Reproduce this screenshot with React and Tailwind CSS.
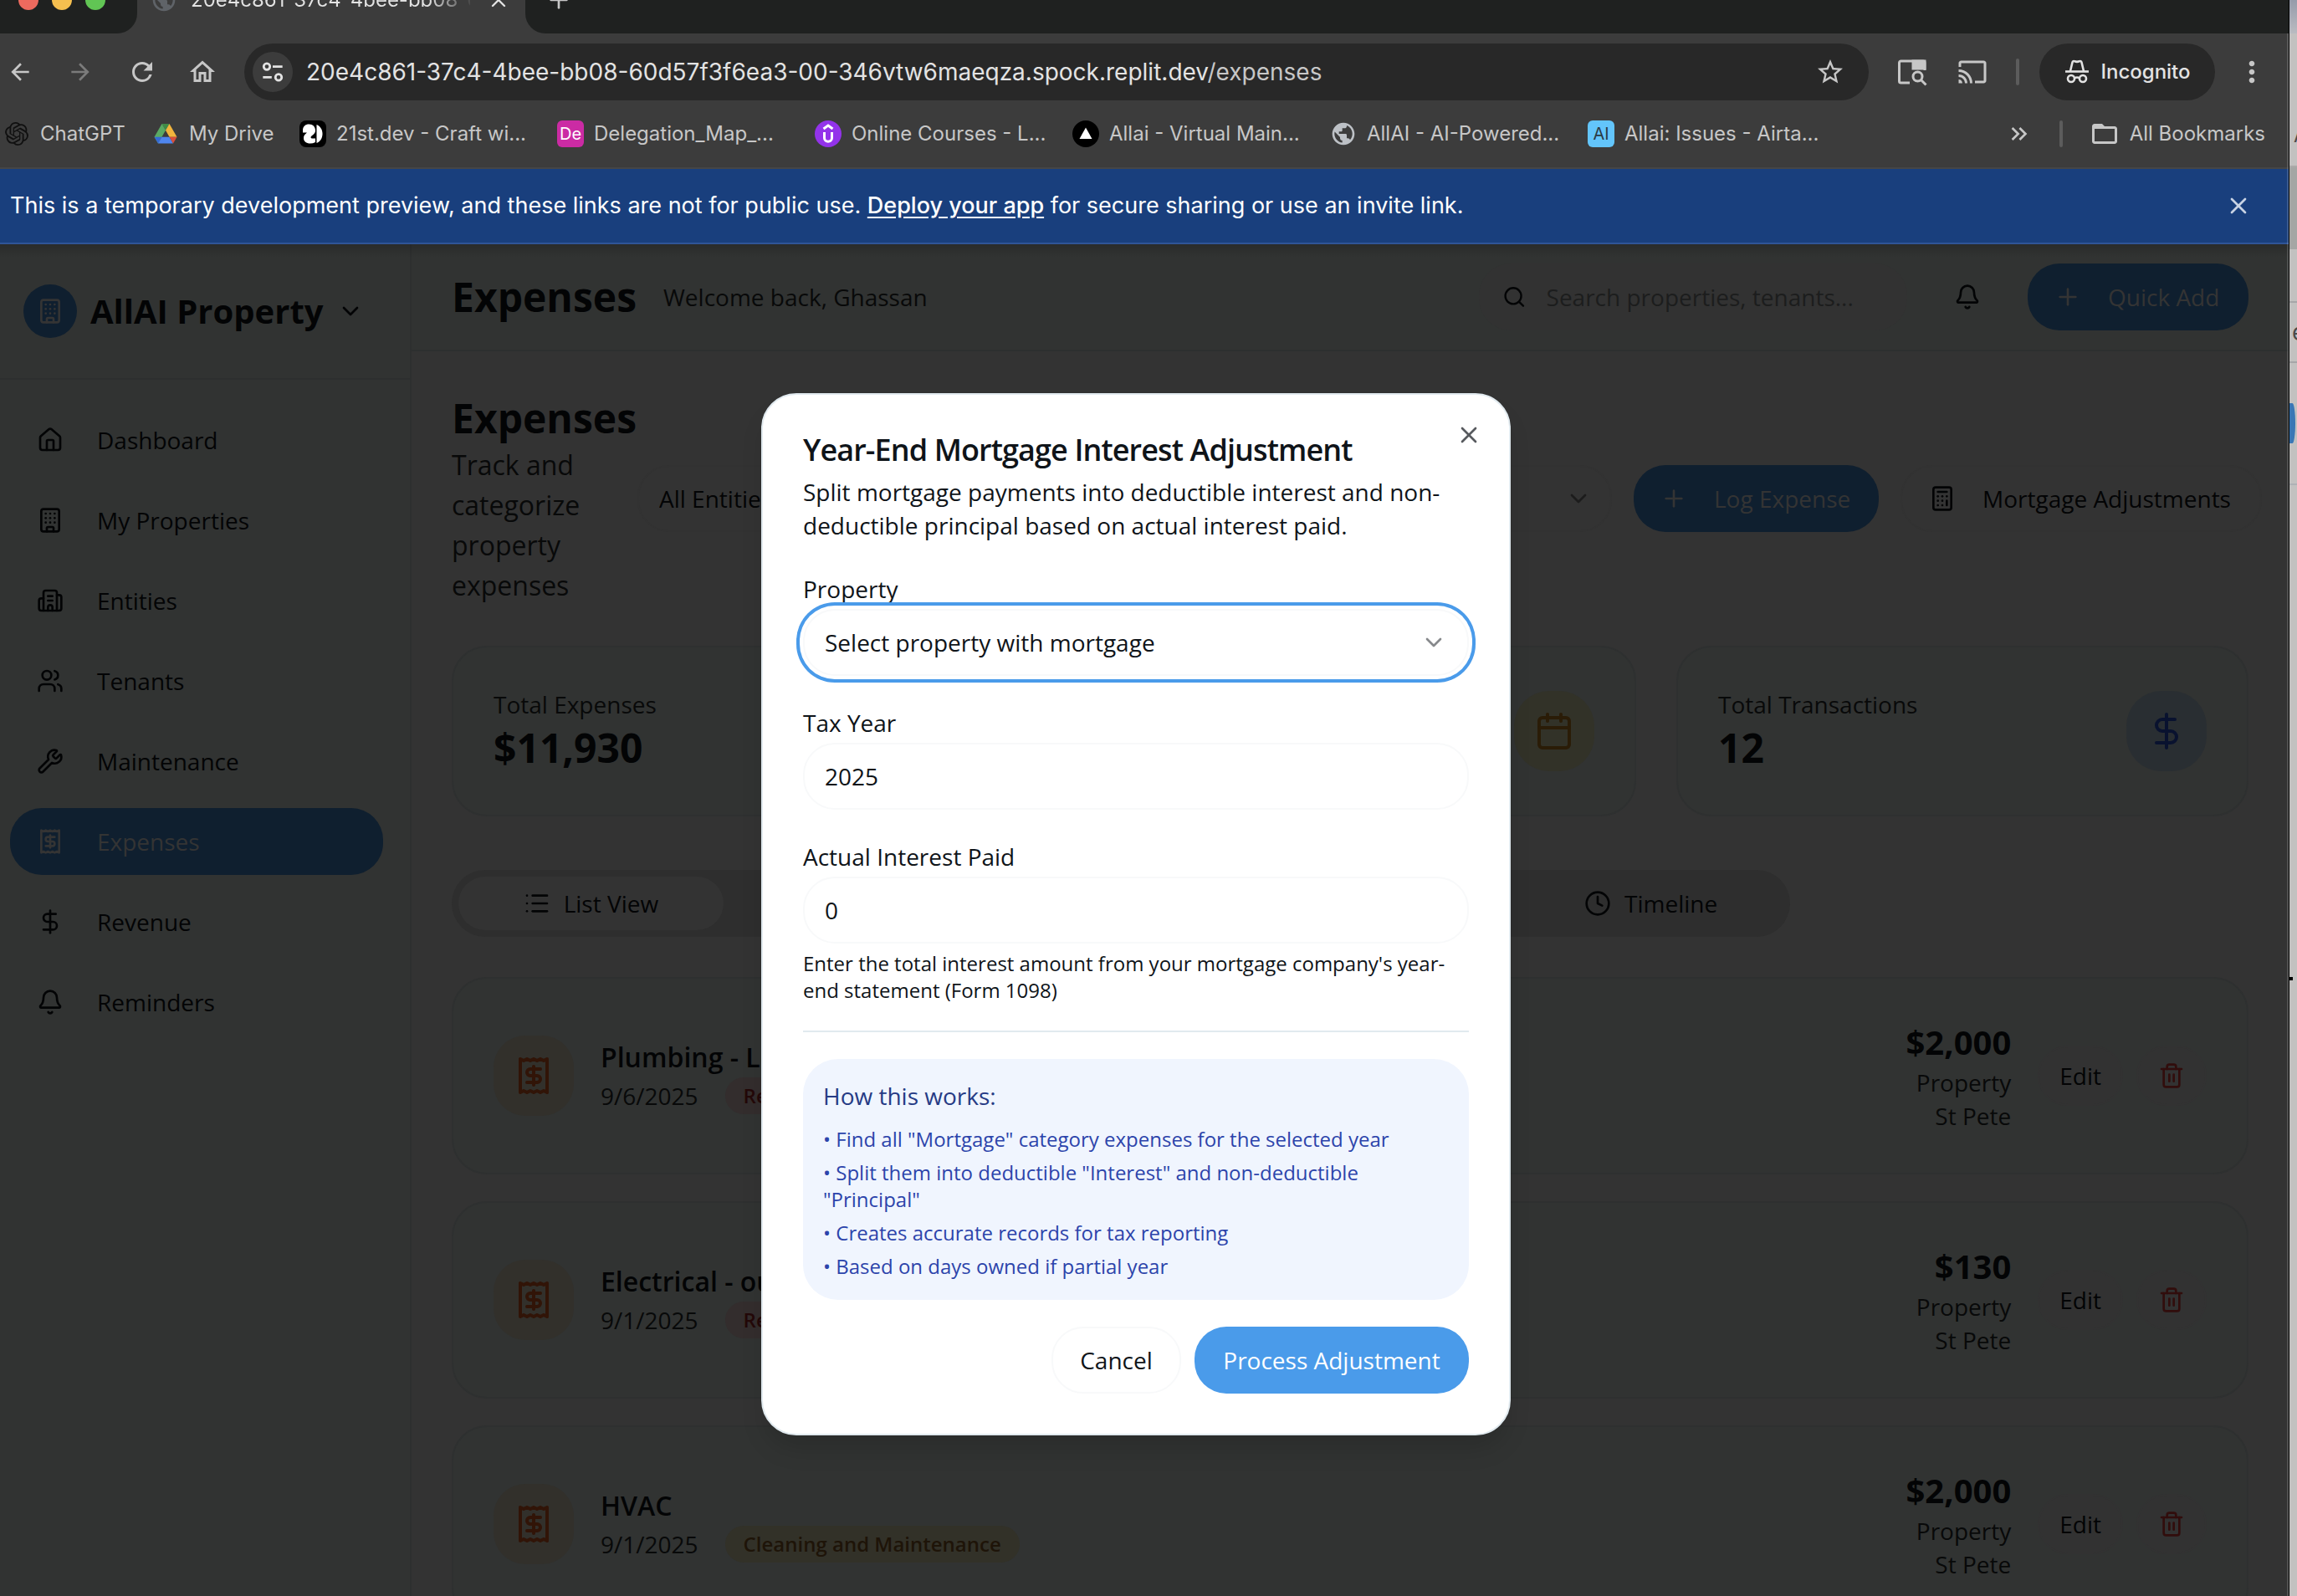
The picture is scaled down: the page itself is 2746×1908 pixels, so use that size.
import React from "react";
import {
  House, Building, Building2, Users, Wrench, Receipt, DollarSign, Bell, ChevronDown,
  Search, Plus, Calculator, Calendar, List, Tag, Clock, Trash2, X, ChartPie, TrendingUp,
} from "lucide-react";
import { SiOpenai } from "react-icons/si";
import {
  MdArrowBack, MdArrowForward, MdRefresh, MdOutlineHome, MdStarBorder, MdCast,
  MdMoreVert, MdPublic, MdFolderOpen, MdKeyboardDoubleArrowRight,
} from "react-icons/md";

function SiteSettingsIcon() {
  return (
    <svg viewBox="0 0 24 24" className="size-7" fill="none" stroke="currentColor" strokeWidth="2.4" aria-hidden="true">
      <circle cx="6" cy="6.5" r="3.2" />
      <path d="M12 6.5h10M2 17.5h9" />
      <circle cx="18" cy="17.5" r="3.2" />
    </svg>
  );
}

function SidePanelSearchIcon() {
  return (
    <svg viewBox="0 0 36 36" className="size-9" fill="none" stroke="currentColor" strokeWidth="3" aria-hidden="true">
      <path d="M15 31H4.500a2 2 0 0 1-2-2V7a2 2 0 0 1 2-2H31a2 2 0 0 1 2 2v9" />
      <path d="M19 5h14v9H19z" fill="currentColor" />
      <circle cx="24.500" cy="23.500" r="5.500" />
      <path d="M28.500 27.500l6 6" />
    </svg>
  );
}

function IncognitoIcon() {
  return (
    <svg viewBox="0 0 32 32" className="size-8" fill="none" stroke="currentColor" strokeWidth="2.600" aria-hidden="true">
      <path d="M2 15.500h28" />
      <path d="M8 15L10.500 4.500c.4-1.500 1.600-1.800 2.800-1.200 1.800.8 3.600.8 5.400 0 1.200-.6 2.400-.3 2.800 1.200L24 15" />
      <circle cx="9" cy="24" r="4" />
      <circle cx="23" cy="24" r="4" />
      <path d="M13 23.500c2-1.300 4-1.300 6 0" />
    </svg>
  );
}

function DriveIcon() {
  return (
    <svg viewBox="0 0 28 28" className="size-7" aria-hidden="true">
      <path d="M9.500 2h9L14 9.800z" fill="#3f8a46" />
      <path d="M9.500 2L14 9.800 5 25.500.5 17.700z" fill="#5aa963" />
      <path d="M18.500 2l9 15.700h-9L14 9.800z" fill="#f2b53d" />
      <path d="M.5 17.700h9L5 25.500z" fill="#3469d6" />
      <path d="M9.500 17.700h9L23 25.500H5z" fill="#4f86ee" />
      <path d="M18.500 17.700h9L23 25.500z" fill="#d94f3d" />
    </svg>
  );
}

function TwentyFirstIcon() {
  return (
    <svg viewBox="0 0 32 32" className="size-8" aria-hidden="true">
      <rect width="32" height="32" rx="8" fill="#000" />
      <path d="M4 12c0-5 3-7.500 7.500-7.500S19 7.500 19 12c0 5-5 5.500-5.500 8 0 1 1 1.500 2.500 1.500h3V26c-2 1-4 1.500-6 1.500-5 0-8-2.500-8-6.500 0-3.500 2.500-5 4-6.500H4z" fill="#fff" />
      <path d="M20.500 5c4.500 2 7 6 7 11s-2.500 9-7 11z" fill="#fff" />
    </svg>
  );
}

function UdemyIcon() {
  return (
    <svg viewBox="0 0 32 32" className="size-8" aria-hidden="true">
      <circle cx="16" cy="16" r="16" fill="#9333ea" />
      <path d="M10.500 10L16 6l5.500 4M11.500 14v7c0 5.500 9 5.500 9 0v-7" fill="none" stroke="#fff" strokeWidth="3" />
    </svg>
  );
}

function TriangleIcon() {
  return (
    <svg viewBox="0 0 32 32" className="size-8" aria-hidden="true">
      <circle cx="16" cy="16" r="16" fill="#000" />
      <path d="M16 8.500L23.500 22h-15z" fill="#fff" />
    </svg>
  );
}

function LetterTile({ children, className }) {
  return <span className={`flex size-8 items-center justify-center rounded-md text-xl leading-8 ${className}`}>{children}</span>;
}

const bookmarks = [
  { label: "ChatGPT", icon: <SiOpenai className="size-7 text-[#101010]" />, width: "w-[178px]" },
  { label: "My Drive", icon: <DriveIcon />, width: "w-[176px]" },
  { label: "21st.dev - Craft wi...", icon: <TwentyFirstIcon />, width: "w-[308px]" },
  { label: "Delegation_Map_...", icon: <LetterTile className="bg-[#cb2ba4] text-white">De</LetterTile>, width: "w-[308px]" },
  { label: "Online Courses - L...", icon: <UdemyIcon />, width: "w-[308px]" },
  { label: "Allai - Virtual Main...", icon: <TriangleIcon />, width: "w-[308px]" },
  { label: "AllAI - AI-Powered...", icon: <MdPublic className="size-8 text-[#bdc1c6]" />, width: "w-[308px]" },
  { label: "Allai: Issues - Airta...", icon: <LetterTile className="bg-[#63c5fb] text-[#2b3a44]">AI</LetterTile>, width: "w-[308px]" },
];

function BrowserChrome() {
  return (
    <header className="shrink-0 border-b-2 border-[#464646] bg-[#3c3c3c] font-[Inter,sans-serif] text-[#c7c7c7]">
      <div className="h-10 overflow-hidden bg-[#1f2120]">
        <div className="-mt-10 flex h-20 items-stretch">
          <div className="relative z-10 flex w-[164px] items-center gap-4 rounded-br-[24px] bg-[#1f2120] pl-[22px]">
            <span className="size-6 rounded-full bg-[#ed6a5e]" />
            <span className="size-6 rounded-full bg-[#f5bf4f]" />
            <span className="size-6 rounded-full bg-[#61c554]" />
          </div>
          <div className="-ml-6 flex w-[512px] items-center bg-[#3c3c3c] pl-[40px]">
            <MdPublic className="size-8 shrink-0 text-[#5f6368]" />
            <span className="ml-4 w-[334px] overflow-hidden bg-linear-to-r from-[#e3e3e3] from-85% to-[#4a4a4a] bg-clip-text text-2xl whitespace-nowrap text-transparent">
              20e4c861-37c4-4bee-bb08-60d5
            </span>
            <button aria-label="Close tab" className="ml-5 text-[#e3e3e3]"><X className="size-7" /></button>
          </div>
          <div className="relative z-10 -ml-6 flex flex-1 items-center rounded-bl-[24px] bg-[#1f2120] pl-[24px]">
            <button aria-label="New tab" className="text-[#c7c7c7]"><Plus className="size-8" /></button>
          </div>
        </div>
      </div>
      <div className="flex h-[92px] items-center pr-6 pl-2">
        <button aria-label="Back"><MdArrowBack className="size-8" /></button>
        <button aria-label="Forward" className="ml-10 text-[#7b7b7b]"><MdArrowForward className="size-8" /></button>
        <button aria-label="Reload" className="ml-10"><MdRefresh className="size-9" /></button>
        <button aria-label="Home" className="ml-9"><MdOutlineHome className="size-9" /></button>
        <div className="ml-8 flex h-[68px] flex-1 items-center rounded-full bg-[#282828] pr-7 pl-[10px]">
          <button aria-label="Site information" className="flex size-12 items-center justify-center rounded-full bg-[#3c3c3c] text-[#e3e3e3]">
            <SiteSettingsIcon />
          </button>
          <p className="ml-4 flex-1 text-[28px] leading-10 whitespace-nowrap text-[#e3e3e3]">
            20e4c861-37c4-4bee-bb08-60d57f3f6ea3-00-346vtw6maeqza.spock.replit.dev<span className="text-[#c7c7c7]">/expenses</span>
          </p>
          <button aria-label="Bookmark this tab"><MdStarBorder className="size-9" /></button>
        </div>
        <button aria-label="Search side panel" className="ml-[34px]"><SidePanelSearchIcon /></button>
        <button aria-label="Cast" className="ml-9"><MdCast className="size-9" /></button>
        <span className="ml-[34px] h-8 w-1 rounded-full bg-[#5c5c5c]" />
        <div className="ml-6 flex h-[68px] w-[210px] items-center justify-center gap-3 rounded-full bg-[#282828] text-2xl font-medium text-[#e3e3e3]">
          <IncognitoIcon />
          Incognito
        </div>
        <button aria-label="Menu" className="ml-6"><MdMoreVert className="size-10" /></button>
      </div>
      <nav aria-label="Bookmarks" className="flex h-[68px] items-start pt-2 pr-7 pl-1 text-2xl">
        {bookmarks.map((b) => (
          <a key={b.label} href="#" className={`flex h-10 items-center gap-3 whitespace-nowrap ${b.width}`}>
            <span className="flex w-8 shrink-0 justify-center">{b.icon}</span>
            {b.label}
          </a>
        ))}
        <button aria-label="More bookmarks" className="ml-auto flex h-10 items-center"><MdKeyboardDoubleArrowRight className="size-8" /></button>
        <span className="mt-1 ml-8 h-8 w-1 rounded-full bg-[#5c5c5c]" />
        <a href="#" className="ml-8 flex h-10 items-center gap-3 whitespace-nowrap">
          <MdFolderOpen className="size-9" />
          All Bookmarks
        </a>
      </nav>
    </header>
  );
}

function PreviewBanner() {
  return (
    <div className="flex h-[90px] shrink-0 items-center justify-between border-b-2 border-[#2f5597] bg-[#193f7d] pr-11 pl-3 font-[Inter,sans-serif] text-[27px] text-white">
      <p className="whitespace-nowrap">
        This is a temporary development preview, and these links are not for public use.{" "}
        <a href="#" className="font-medium underline underline-offset-4">Deploy your app</a> for secure sharing or use an invite link.
      </p>
      <button aria-label="Dismiss" className="text-[#c8d3e4]"><X className="size-8" /></button>
    </div>
  );
}

const navItems = [
  ["Dashboard", House],
  ["My Properties", Building],
  ["Entities", Building2],
  ["Tenants", Users],
  ["Maintenance", Wrench],
  ["Expenses", Receipt],
  ["Revenue", DollarSign],
  ["Reminders", Bell],
];

function Sidebar() {
  return (
    <aside className="w-[492px] shrink-0 border-r-2 border-[#2d2f2f] bg-[#313332]">
      <div className="flex items-center border-b-2 border-[#2d2f2f] py-12 pl-7">
        <span className="flex size-16 items-center justify-center rounded-full bg-[#0f1f2f] text-[#343434]">
          <Building className="size-8" />
        </span>
        <span className="ml-4 text-[40px] leading-10 font-bold text-[#030405]">AllAI Property</span>
        <button aria-label="Switch organisation" className="ml-4"><ChevronDown className="size-8" /></button>
      </div>
      <nav className="flex flex-col gap-4 py-8 pr-8 pl-3">
        {navItems.map(([label, Icon]) => (
          <a
            key={label}
            href="#"
            aria-current={label === "Expenses" ? "page" : undefined}
            className={`flex h-20 items-center gap-10 rounded-[38px] px-8 text-[28px] font-medium ${
              label === "Expenses" ? "bg-[#0f1f2f] text-[#343434]" : "text-[#030405]"
            }`}
          >
            <Icon className="size-8" />
            {label}
          </a>
        ))}
      </nav>
    </aside>
  );
}

function TopBar() {
  return (
    <div className="flex h-32 items-center border-b-2 border-[#2d2f2f] bg-[#313332] px-12 text-[28px]">
      <h1 className="text-5xl leading-16 font-bold">Expenses</h1>
      <p className="ml-8 text-[#080909]">Welcome back, Ghassan</p>
      <label className="ml-auto flex h-20 w-[512px] items-center gap-6 rounded-[38px] bg-[#323232] pl-7">
        <Search className="size-8" />
        <input
          aria-label="Search"
          placeholder="Search properties, tenants..."
          className="w-full bg-transparent placeholder:text-[#1c1d1d]"
        />
      </label>
      <button aria-label="Notifications" className="ml-14"><Bell className="size-8" /></button>
      <button className="ml-14 flex h-20 min-w-[264px] items-center gap-8 rounded-[38px] bg-[#0f1f2f] px-8 font-medium text-[#343434]">
        <Plus className="size-8" />
        Quick Add
      </button>
    </div>
  );
}

function FilterSelect({ label, className }) {
  return (
    <div className={`relative ${className}`}>
      <select aria-label={label} className="h-20 w-full appearance-none rounded-[38px] border-2 border-[#323232] px-6 text-[28px]">
        <option>{label}</option>
      </select>
      <ChevronDown className="pointer-events-none absolute top-6 right-6 size-8 text-[#1c1c1c]" />
    </div>
  );
}

function PageHeader() {
  return (
    <div className="-mr-4 flex items-center gap-[26px] text-[28px]">
      <div className="w-[196px] shrink-0">
        <h2 className="text-5xl leading-16 font-bold">Expenses</h2>
        <p className="text-[32px] leading-12 text-[#080909]">Track and categorize property expenses</p>
      </div>
      <FilterSelect label="All Entities" className="flex-1" />
      <FilterSelect label="All Properties" className="flex-1" />
      <FilterSelect label="All Categories" className="flex-1" />
      <button className="flex h-20 min-w-[293px] items-center gap-8 rounded-[38px] bg-[#0f1f2f] px-8 font-medium whitespace-nowrap text-[#343434]">
        <Plus className="size-8" />
        Log Expense
      </button>
      <button className="flex h-20 min-w-[432px] items-center gap-8 rounded-[38px] border-2 border-[#323232] px-8 font-medium whitespace-nowrap">
        <Calculator className="size-8" />
        Mortgage Adjustments
      </button>
    </div>
  );
}

function StatCard({ label, value, icon: Icon, tone }) {
  return (
    <section className="flex items-center justify-between rounded-[42px] border-2 border-[#2e3030] bg-[#313332] p-12">
      <div>
        <h3 className="text-[28px] leading-10 font-medium text-[#080909]">{label}</h3>
        <p className="text-5xl leading-16 font-bold">{value}</p>
      </div>
      <span className={`flex size-24 items-center justify-center rounded-[42px] ${tone}`}>
        <Icon className="size-12" />
      </span>
    </section>
  );
}

const tabs = [
  ["List View", List],
  ["Category", Tag],
  ["Chart", ChartPie],
  ["Trends", TrendingUp],
  ["Timeline", Clock],
];

function ViewTabs() {
  return (
    <div role="tablist" className="grid h-20 w-[1600px] grid-cols-5 rounded-[42px] bg-[#2e2e2e] p-2 text-[28px] font-medium">
      {tabs.map(([label, Icon], i) => (
        <button
          key={label}
          role="tab"
          aria-selected={i === 0}
          className={`flex items-center justify-center gap-4 rounded-[38px] ${i === 0 ? "bg-[#333333]" : ""}`}
        >
          <Icon className="size-8" />
          {label}
        </button>
      ))}
    </div>
  );
}

const expenses = [
  { title: "Plumbing - Leak repair", date: "9/6/2025", category: "Repairs", tone: "bg-[#332d2d] text-[#230808]", amount: "$2,000" },
  { title: "Electrical - outlets", date: "9/1/2025", category: "Repairs", tone: "bg-[#332d2d] text-[#230808]", amount: "$130" },
  { title: "HVAC", date: "9/1/2025", category: "Cleaning and Maintenance", tone: "bg-[#323128] text-[#1e1408]", amount: "$2,000" },
];

function ExpenseRow({ expense }) {
  return (
    <li className="flex items-center rounded-[42px] border-2 border-[#2e3030] bg-[#313332] p-12">
      <span className="flex size-24 items-center justify-center rounded-[38px] bg-[#32302b] text-[#311407]">
        <Receipt className="size-12" />
      </span>
      <div className="ml-8">
        <h3 className="text-[32px] leading-12 font-semibold">{expense.title}</h3>
        <div className="flex items-center gap-8">
          <span className="text-[28px] leading-10 text-[#080909]">{expense.date}</span>
          <span className={`rounded-full px-[22px] py-1.5 text-2xl leading-8 font-semibold ${expense.tone}`}>{expense.category}</span>
        </div>
      </div>
      <div className="ml-auto text-right text-[28px] leading-10 text-[#080909]">
        <p className="text-[40px] leading-14 font-bold text-[#030405]">{expense.amount}</p>
        <p>Property</p>
        <p>St Pete</p>
      </div>
      <button className="ml-8 h-[72px] rounded-[38px] border-2 border-[#323232] bg-[#323232] px-6 text-[28px] font-medium">Edit</button>
      <button aria-label="Delete" className="ml-4 h-[72px] rounded-[38px] border-2 border-[#323232] bg-[#323232] px-6 text-[#310d0c]">
        <Trash2 className="size-8" />
      </button>
    </li>
  );
}

function MortgageDialog() {
  const field = "h-20 w-full rounded-[38px] border-2 border-[#f8f9fa] bg-white px-6 text-[28px]";
  return (
    <div
      role="dialog"
      aria-labelledby="dialog-title"
      className="relative w-[896px] rounded-[42px] border-2 border-[#e1eaef] bg-white p-12 text-[28px] text-[#0f1419] shadow-[0_20px_30px_-6px_rgba(0,0,0,0.15)]"
    >
      <button aria-label="Close" className="absolute top-8 right-8 text-[#575a5e]"><X className="size-8" /></button>
      <h2 id="dialog-title" className="text-4xl leading-9 font-semibold tracking-tight">Year-End Mortgage Interest Adjustment</h2>
      <p className="mt-3 leading-10">Split mortgage payments into deductible interest and non-deductible principal based on actual interest paid.</p>
      <form className="mt-9 flex flex-col">
        <label htmlFor="property" className="leading-10 font-medium">Property</label>
        <div className="relative mt-1 mb-9">
          <select id="property" className={`${field} appearance-none ring-4 ring-[#4a9bea] ring-offset-4`}>
            <option>Select property with mortgage</option>
          </select>
          <ChevronDown className="pointer-events-none absolute top-6 right-[26px] size-8 text-[#87898c]" />
        </div>
        <label htmlFor="tax-year" className="leading-10 font-medium">Tax Year</label>
        <input id="tax-year" defaultValue="2025" className={`${field} mt-1 mb-9`} />
        <label htmlFor="interest" className="leading-10 font-medium">Actual Interest Paid</label>
        <input id="interest" defaultValue="0" className={`${field} mt-1`} />
        <p className="mt-2 text-2xl leading-8">Enter the total interest amount from your mortgage company's year-end statement (Form 1098)</p>
        <hr className="my-8 border-t-2 border-[#e1eaef]" />
        <section className="rounded-[42px] bg-[#f0f5fe] p-6">
          <h3 className="leading-10 font-medium text-[#263b85]">How this works:</h3>
          <ul className="mt-4 flex flex-col gap-2 text-2xl leading-8 text-[#2c44ab]">
            <li>• Find all "Mortgage" category expenses for the selected year</li>
            <li>• Split them into deductible "Interest" and non-deductible "Principal"</li>
            <li>• Creates accurate records for tax reporting</li>
            <li>• Based on days owned if partial year</li>
          </ul>
        </section>
        <div className="mt-8 flex justify-end gap-4 font-medium">
          <button type="button" className="h-20 min-w-[155px] rounded-[38px] border-2 border-[#f8f9fa] px-8">Cancel</button>
          <button type="button" className="h-20 min-w-[328px] rounded-[38px] bg-[#4a9bea] px-8 text-white">Process Adjustment</button>
        </div>
      </form>
    </div>
  );
}

/* Sliver of the window that sits behind this one at the right edge of the screen. */
function BackgroundWindow() {
  return (
    <div aria-hidden="true" className="flex w-[9px] shrink-0 flex-col overflow-hidden bg-[#c2c1c0] font-[Inter,sans-serif] text-[#4a4a4a]">
      <div className="h-10 shrink-0 bg-linear-to-b from-[#959baa] to-[#b9bbc1]" />
      <div className="flex h-40 shrink-0 items-end border-b-2 border-[#aaa9a8] pb-5 pl-[5px] text-2xl">A</div>
      <div className="h-[98px] shrink-0 bg-[#a4a6a4]" />
      <div className="h-[64px] shrink-0 border-b-2 border-[#a6a6a8]" />
      <div className="flex h-[72px] shrink-0 items-center border-b-2 border-[#a6a6a8] pl-[3px] text-[28px]">e</div>
      <div className="flex h-[146px] shrink-0 items-center border-b-2 border-[#aeb1b6]">
        <span className="h-12 w-[7px] rounded-r-[100%] bg-[#3a77b5]" />
      </div>
      <div className="mt-[588px] h-1 w-1 bg-black" />
    </div>
  );
}

export default function App() {
  return (
    <div className="flex h-screen overflow-hidden bg-[#c4c4c4]">
      <div className="relative flex min-w-0 flex-1 flex-col border-r border-black bg-[#333333]">
        <BrowserChrome />
        <PreviewBanner />
        <div className="relative flex min-h-0 flex-1 overflow-hidden font-['Open_Sans',sans-serif] text-[#030405]">
          <Sidebar />
          <main className="min-w-0 flex-1">
            <TopBar />
            <div className="flex flex-col gap-12 p-12">
              <PageHeader />
              <div className="grid grid-cols-3 gap-12">
                <StatCard label="Total Expenses" value="$11,930" icon={Receipt} tone="bg-[#332d2d] text-[#2c0808]" />
                <StatCard label="This Month" value="$4,130" icon={Calendar} tone="bg-[#323228] text-[#2a1c07]" />
                <StatCard label="Total Transactions" value="12" icon={DollarSign} tone="bg-[#292e32] text-[#09122f]" />
              </div>
              <div className="mt-4 flex flex-col gap-12">
                <ViewTabs />
                <ul className="flex flex-col gap-8">
                  {expenses.map((e) => <ExpenseRow key={e.title} expense={e} />)}
                </ul>
              </div>
            </div>
          </main>
          <div className="absolute inset-x-0 top-0 h-4 bg-linear-to-b from-black/15 to-transparent" />
          <div className="absolute inset-0 flex items-start justify-center pt-[178px] pr-5">
            <MortgageDialog />
          </div>
        </div>
        <div className="pointer-events-none absolute top-10 right-0 bottom-0 w-0.5 bg-white/15" />
      </div>
      <BackgroundWindow />
    </div>
  );
}
